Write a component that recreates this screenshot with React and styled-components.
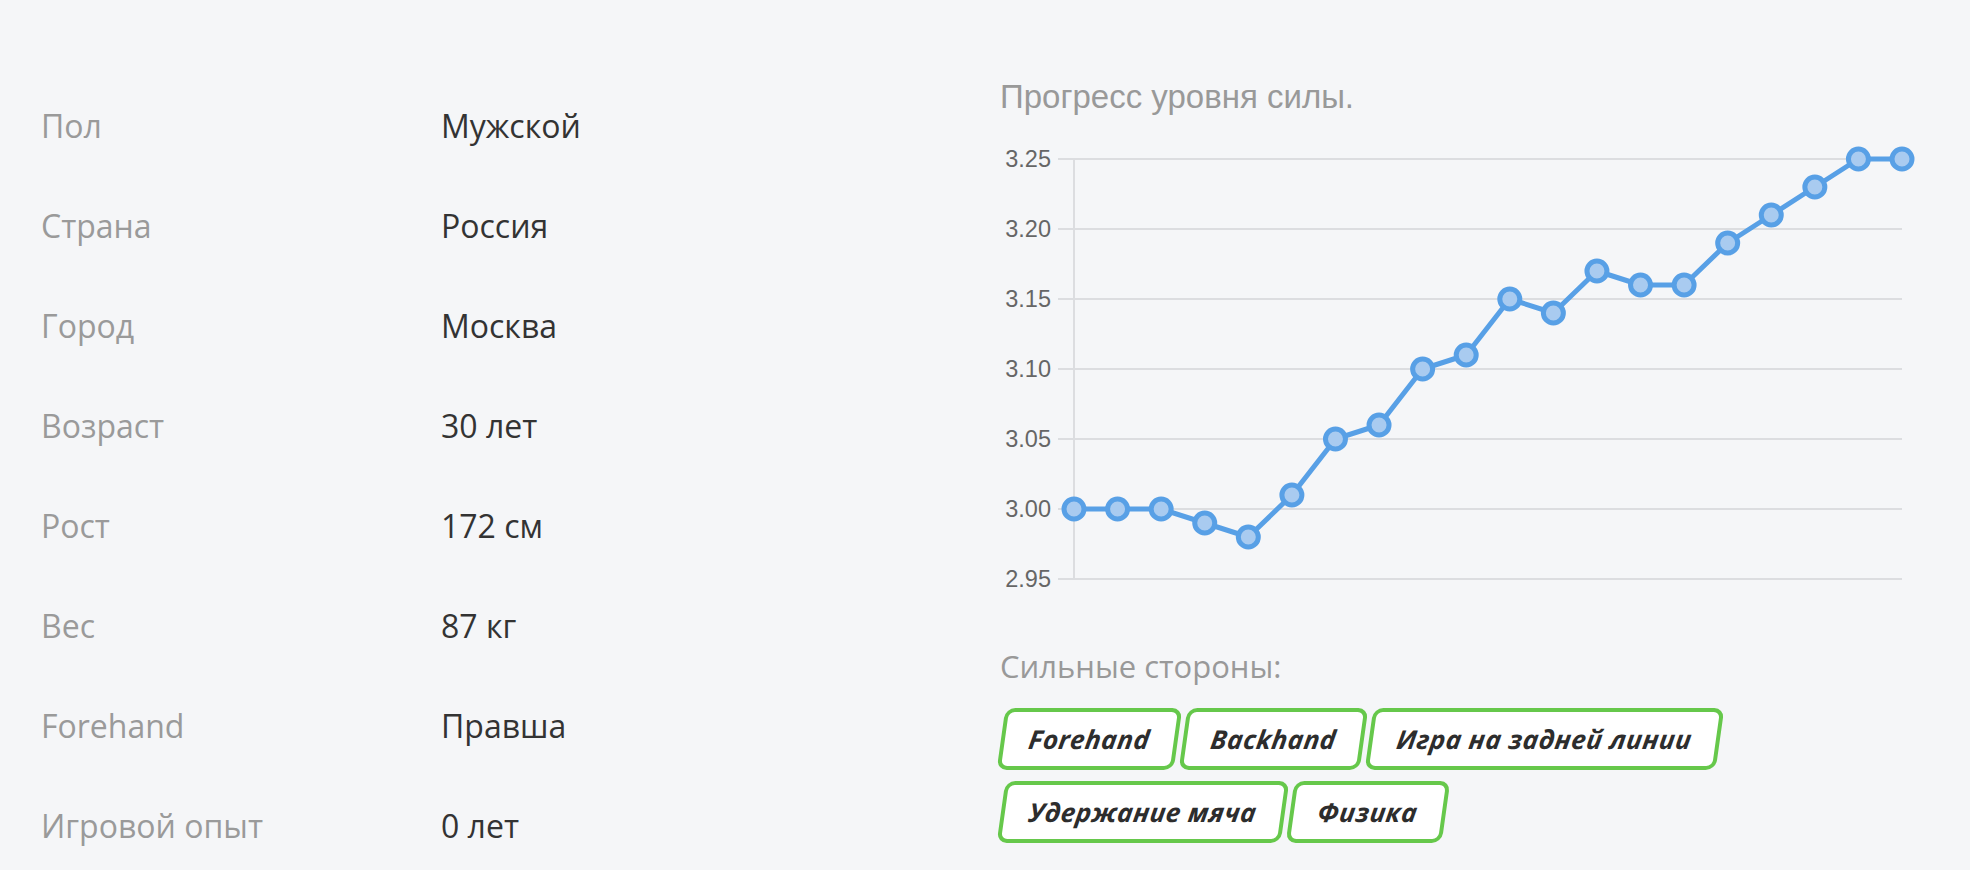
import React from 'react'
import styled, { createGlobalStyle } from 'styled-components'

const GlobalStyle = createGlobalStyle`
  html, body {
    margin: 0;
    padding: 0;
    background: #f5f6f8;
  }
`;

const Page = styled.div`
  display: grid;
  grid-template-columns: 959px 1fr;
  padding: 75px 0 0 41px;
  min-height: 870px;
  box-sizing: border-box;
  background: #f5f6f8;
  overflow: hidden;
`;

const InfoList = styled.div`
  display: grid;
  grid-template-columns: 400px 1fr;
  grid-auto-rows: 100px;
  align-items: center;
  font-family: 'Open Sans', sans-serif;
  font-size: 32px;
`;

const Label = styled.div`
  color: #9a9a9a;
`;

const Value = styled.div`
  color: #333333;
`;

const Side = styled.div`
  display: flex;
  flex-direction: column;
`;

const ChartTitle = styled.h3`
  margin: 2px 0 0;
  height: 40px;
  line-height: 40px;
  font-family: 'Liberation Sans', Arial, sans-serif;
  font-weight: 400;
  font-size: 33px;
  color: #999999;
`;

const ChartBox = styled.div`
  height: 480px;
  margin-top: 1px;
`;

const StrengthTitle = styled.h4`
  margin: 48px 0 0;
  height: 40px;
  line-height: 40px;
  font-family: 'Open Sans', sans-serif;
  font-weight: 400;
  font-size: 31px;
  color: #999999;
`;

const Tags = styled.div`
  display: flex;
  flex-wrap: wrap;
  width: 760px;
  gap: 11px 5px;
  margin-top: 22px;
  padding-left: 1px;
`;

const Tag = styled.div`
  height: 62px;
  box-sizing: border-box;
  display: flex;
  align-items: center;
  padding: 0 24px 0 24px;
  background: #ffffff;
  border: 4px solid #66c84b;
  border-radius: 10px;
  transform: skewX(-8deg);
  font-family: 'Open Sans', sans-serif;
  font-style: italic;
  font-weight: 700;
  font-size: 26px;
  color: #2d2d2d;
  letter-spacing: 0.5px;
`;

const info = [
  ['Пол', 'Мужской'],
  ['Страна', 'Россия'],
  ['Город', 'Москва'],
  ['Возраст', '30 лет'],
  ['Рост', '172 см'],
  ['Вес', '87 кг'],
  ['Forehand', 'Правша'],
  ['Игровой опыт', '0 лет'],
];

const values = [3.0, 3.0, 3.0, 2.99, 2.98, 3.01, 3.05, 3.06, 3.1, 3.11, 3.15, 3.14, 3.17, 3.16, 3.16, 3.19, 3.21, 3.23, 3.25, 3.25];
const ticks = [3.25, 3.2, 3.15, 3.1, 3.05, 3.0, 2.95];

const left = 74;
const right = 902;
const yOf = (v) => 391 - (v - 3.0) * 1400;
const xOf = (i) => left + (i * (right - left)) / (values.length - 1);

const LineChart = () => {
  const pts = values.map((v, i) => `${xOf(i).toFixed(1)},${yOf(v).toFixed(1)}`).join(' ');
  return (
    <svg width="920" height="480" viewBox="0 0 920 480">
      {ticks.map((t) => (
        <g key={t}>
          <line x1="58" x2={right} y1={yOf(t)} y2={yOf(t)} stroke="#dcdde0" strokeWidth="2" />
          <text
            x="51"
            y={yOf(t) + 8}
            textAnchor="end"
            fontFamily="'Liberation Sans', Arial, sans-serif"
            fontSize="23.5"
            fill="#666666"
          >
            {t.toFixed(2)}
          </text>
        </g>
      ))}
      <line x1={left} x2={left} y1={yOf(3.25)} y2={yOf(2.95)} stroke="#dcdde0" strokeWidth="2" />
      <polyline points={pts} fill="none" stroke="#58a0e6" strokeWidth="5" strokeLinejoin="round" />
      {values.map((v, i) => (
        <circle key={i} cx={xOf(i)} cy={yOf(v)} r="10" fill="#a9cbf0" stroke="#58a0e6" strokeWidth="5" />
      ))}
    </svg>
  );
};

const strengths = ['Forehand', 'Backhand', 'Игра на задней линии', 'Удержание мяча', 'Физика'];

const App = () => {
  return (
    <>
      <GlobalStyle />
      <Page>
        <InfoList>
          {info.map(([k, v]) => (
            <React.Fragment key={k}>
              <Label>{k}</Label>
              <Value>{v}</Value>
            </React.Fragment>
          ))}
        </InfoList>
        <Side>
          <ChartTitle>Прогресс уровня силы.</ChartTitle>
          <ChartBox>
            <LineChart />
          </ChartBox>
          <StrengthTitle>Сильные стороны:</StrengthTitle>
          <Tags>
            {strengths.map((s) => (
              <Tag key={s}>{s}</Tag>
            ))}
          </Tags>
        </Side>
      </Page>
    </>
  )
}

export default App;
